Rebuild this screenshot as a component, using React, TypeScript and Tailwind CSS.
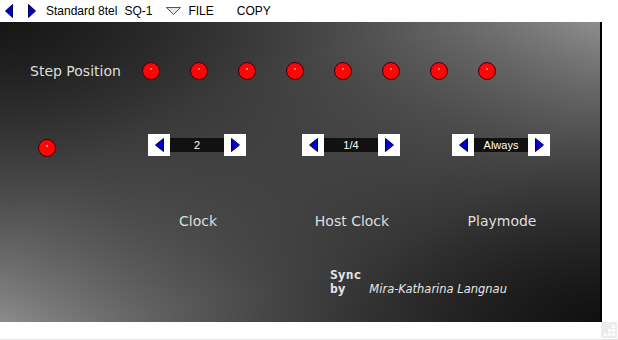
import React from "react";

function Arrow({ dir, w = 9, h = 14 }: { dir: "left" | "right"; w?: number; h?: number }) {
  const pts =
    dir === "left"
      ? `${w - 0.5},0.5 ${w - 0.5},${h - 0.5} 0.5,${h / 2}`
      : `0.5,0.5 0.5,${h - 0.5} ${w - 0.5},${h / 2}`;
  return (
    <svg width={w} height={h} viewBox={`0 0 ${w} ${h}`}>
      <polygon points={pts} fill="#0000cc" stroke="#00004a" strokeWidth="1" />
    </svg>
  );
}

function Led() {
  return (
    <div className="w-[18px] h-[18px] rounded-full bg-[#ff0505] border-[1.5px] border-[#3a0000] flex items-start justify-center pt-[5px] shrink-0">
      <div className="w-[2px] h-[2px] rounded-full bg-[#ffb0b0]" />
    </div>
  );
}

function Spinner({ value }: { value: string }) {
  return (
    <div className="flex items-center w-[98px] h-[22px] shrink-0">
      <div className="w-[22px] h-[22px] bg-white flex items-center justify-center">
        <Arrow dir="left" />
      </div>
      <div className="w-[54px] h-[14px] bg-[#111111] text-white text-[11px] leading-none flex items-center justify-center font-['Liberation_Sans',Arial,sans-serif]">
        {value}
      </div>
      <div className="w-[22px] h-[22px] bg-white flex items-center justify-center">
        <Arrow dir="right" />
      </div>
    </div>
  );
}

export default function App() {
  const steps = [0, 1, 2, 3, 4, 5, 6, 7];
  const labels = [
    { name: "Clock", ml: "ml-[149px]" },
    { name: "Host Clock", ml: "ml-[56px]" },
    { name: "Playmode", ml: "ml-[52px]" },
  ];

  return (
    <div className="w-[618px] h-[340px] bg-white overflow-hidden flex flex-col border-b border-[#e2e2e2] font-['DejaVu_Sans',Verdana,sans-serif]">
      {/* Toolbar */}
      <div className="h-[22px] flex items-center text-[12px] text-black font-['Liberation_Sans',Arial,sans-serif] shrink-0">
        <div className="ml-[5px] flex items-center">
          <Arrow dir="left" w={8} h={14} />
        </div>
        <div className="ml-[15px] flex items-center">
          <Arrow dir="right" w={8} h={14} />
        </div>
        <span className="ml-[10px]">Standard 8tel</span>
        <span className="ml-[7px]">SQ-1</span>
        <svg className="ml-[14px]" width="15" height="8" viewBox="0 0 15 8">
          <polygon points="0.5,0.5 14.5,0.5 7.5,7.5" fill="#e8e8e8" stroke="#555" strokeWidth="1" />
        </svg>
        <span className="ml-[7px]">FILE</span>
        <span className="ml-[23px]">COPY</span>
      </div>

      {/* Main area */}
      <div className="flex h-[300px] shrink-0">
        <div className="w-[602px] h-[300px] border-r-2 border-black flex flex-col text-[#dedede] [background-color:#505050] [background-image:radial-gradient(ellipse_100%_100%_at_0%_0%,rgba(22,22,22,1),rgba(22,22,22,0)),radial-gradient(ellipse_100%_100%_at_100%_100%,rgba(16,16,16,1),rgba(16,16,16,0)),radial-gradient(ellipse_100%_100%_at_100%_0%,rgba(142,142,142,1),rgba(142,142,142,0)),radial-gradient(ellipse_100%_100%_at_0%_100%,rgba(140,140,140,1),rgba(140,140,140,0))]">
          {/* Step position */}
          <div className="mt-[40px] h-[18px] flex items-center pl-[30px]">
            <span className="w-[112px] text-[14px] leading-none whitespace-nowrap">Step Position</span>
            <div className="flex gap-[30px]">
              {steps.map((s) => (
                <Led key={s} />
              ))}
            </div>
          </div>

          {/* Spinners */}
          <div className="mt-[54px] h-[22px] flex items-center pl-[38px]">
            <div className="mt-[6px]">
              <Led />
            </div>
            <div className="ml-[92px]">
              <Spinner value="2" />
            </div>
            <div className="ml-[56px]">
              <Spinner value="1/4" />
            </div>
            <div className="ml-[52px]">
              <Spinner value="Always" />
            </div>
          </div>

          {/* Labels */}
          <div className="mt-[56px] h-[17px] flex items-center text-[14px] leading-none">
            {labels.map((l) => (
              <div key={l.name} className={`${l.ml} w-[98px] text-center whitespace-nowrap`}>
                {l.name}
              </div>
            ))}
          </div>

          {/* Credits */}
          <div className="mt-[39px] ml-[330px] flex items-end text-[#e6e6e6]">
            <div className="font-['DejaVu_Sans_Mono',monospace] font-bold text-[13px] leading-[14px]">
              <div>Sync</div>
              <div>by</div>
            </div>
            <span className="ml-[8px] italic text-[11.5px] leading-[14px] whitespace-nowrap">Mira-Katharina Langnau</span>
          </div>
        </div>
      </div>

      {/* Bottom strip with grip */}
      <div className="flex-1 flex justify-end">
        <div className="w-[16px] h-[16px] mr-[1px] bg-[#ececec]">
          <svg width="16" height="16" viewBox="0 0 16 16">
            <rect x="11" y="3" width="3" height="3" fill="#fbfbfb" />
            <rect x="7" y="7" width="3" height="3" fill="#fbfbfb" />
            <rect x="11" y="7" width="3" height="3" fill="#fbfbfb" />
            <rect x="3" y="11" width="3" height="3" fill="#fbfbfb" />
            <rect x="7" y="11" width="3" height="3" fill="#fbfbfb" />
            <rect x="11" y="11" width="3" height="3" fill="#fbfbfb" />
          </svg>
        </div>
      </div>
    </div>
  );
}
